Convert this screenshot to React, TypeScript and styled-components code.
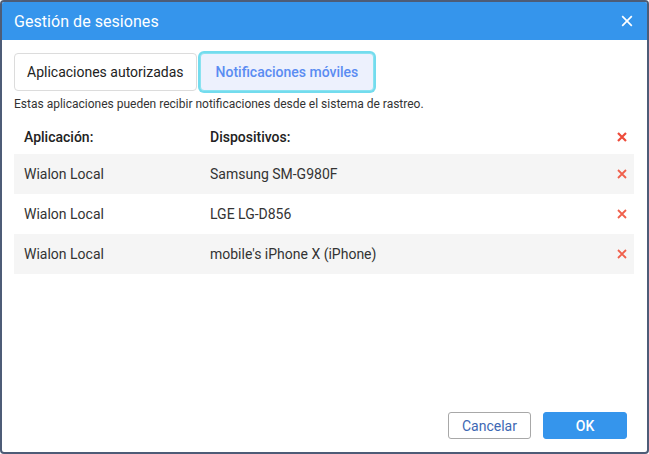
import React from "react";
import styled, { createGlobalStyle } from "styled-components";

const Global = createGlobalStyle`
  html, body { margin: 0; padding: 0; background: #fff; }
  body { font-family: Roboto, "Noto Sans", Arial, sans-serif; }
  * { box-sizing: border-box; }
`;

const Dialog = styled.div`
  width: 649px;
  height: 454px;
  border: 2px solid #4d5c77;
  border-radius: 4px;
  display: flex;
  flex-direction: column;
  background: #fff;
  overflow: hidden;
`;

const Header = styled.div`
  height: 38px;
  background: #3595ec;
  display: flex;
  align-items: center;
  justify-content: space-between;
  padding: 0 12px 0 12px;
  color: #fff;
  flex-shrink: 0;
`;

const Title = styled.div`
  font-size: 16px;
  font-weight: 400;
  letter-spacing: 0.05px;
`;

const CloseBtn = styled.button`
  border: none;
  background: none;
  padding: 0;
  width: 16px;
  height: 16px;
  display: flex;
  align-items: center;
  justify-content: center;
  cursor: pointer;
`;

const Body = styled.div`
  flex: 1;
  padding: 13px 13px 0 12px;
  display: flex;
  flex-direction: column;
`;

const Tabs = styled.div`
  display: flex;
  align-items: center;
  height: 38px;
`;

const Tab = styled.button<{ $active?: boolean }>`
  height: 38px;
  padding: 0 ${(p) => (p.$active ? "15px" : "12px")};
  font-family: inherit;
  font-size: 14px;
  font-weight: ${(p) => (p.$active ? 500 : 400)};
  border-radius: 4px;
  cursor: pointer;
  background: ${(p) => (p.$active ? "#edf1fd" : "#fff")};
  color: ${(p) => (p.$active ? "#5a8cf2" : "#222")};
  border: 1px solid ${(p) => (p.$active ? "#8ae2f0" : "#dcdcdc")};
  box-shadow: ${(p) => (p.$active ? "0 0 0 2px #73dcee" : "none")};
  margin-left: ${(p) => (p.$active ? "3px" : "0")};
`;

const Hint = styled.div`
  margin-top: 5px;
  font-size: 12px;
  color: #333;
  line-height: 16px;
`;

const Table = styled.div`
  margin-top: 8px;
  display: flex;
  flex-direction: column;
`;

const Row = styled.div<{ $shade?: boolean; $head?: boolean }>`
  display: grid;
  grid-template-columns: 186px 1fr 20px;
  align-items: center;
  height: ${(p) => (p.$head ? "34px" : "40px")};
  padding: 0 2px 0 10px;
  background: ${(p) => (p.$shade ? "#f5f5f5" : "#fff")};
  font-size: 14px;
  color: ${(p) => (p.$head ? "#222" : "#333")};
  font-weight: ${(p) => (p.$head ? 500 : 400)};
`;

const Cell = styled.div`
  white-space: nowrap;
`;

const DelBtn = styled.button`
  border: none;
  background: none;
  padding: 0;
  width: 20px;
  height: 20px;
  display: flex;
  align-items: center;
  justify-content: center;
  cursor: pointer;
`;

const Footer = styled.div`
  display: flex;
  justify-content: flex-end;
  gap: 12px;
  padding: 0 20px 13px 0;
`;

const Button = styled.button<{ $primary?: boolean }>`
  height: 27px;
  width: ${(p) => (p.$primary ? "84px" : "83px")};
  border-radius: 3px;
  font-family: inherit;
  font-size: 14px;
  font-weight: ${(p) => (p.$primary ? 500 : 400)};
  cursor: pointer;
  background: ${(p) => (p.$primary ? "#3595ec" : "#fff")};
  color: ${(p) => (p.$primary ? "#fff" : "#3d68b3")};
  border: 1px solid ${(p) => (p.$primary ? "#3595ec" : "#a8a8a8")};
`;

const XIcon = ({ size, color, stroke }: { size: number; color: string; stroke: number }) => (
  <svg width={size} height={size} viewBox="0 0 10 10">
    <path d="M1 1 L9 9 M9 1 L1 9" stroke={color} strokeWidth={stroke} strokeLinecap="butt" />
  </svg>
);

const rows = [
  { app: "Wialon Local", device: "Samsung SM-G980F" },
  { app: "Wialon Local", device: "LGE LG-D856" },
  { app: "Wialon Local", device: "mobile's iPhone X (iPhone)" },
];

export default function App() {
  return (
    <>
      <Global />
      <Dialog>
        <Header>
          <Title>Gestión de sesiones</Title>
          <CloseBtn aria-label="Cerrar">
            <XIcon size={12} color="#fff" stroke={1.4} />
          </CloseBtn>
        </Header>
        <Body>
          <Tabs>
            <Tab>Aplicaciones autorizadas</Tab>
            <Tab $active>Notificaciones móviles</Tab>
          </Tabs>
          <Hint>Estas aplicaciones pueden recibir notificaciones desde el sistema de rastreo.</Hint>
          <Table>
            <Row $head>
              <Cell>Aplicación:</Cell>
              <Cell>Dispositivos:</Cell>
              <DelBtn aria-label="Eliminar todo">
                <XIcon size={10} color="#ee4b3a" stroke={2.2} />
              </DelBtn>
            </Row>
            {rows.map((r, i) => (
              <Row key={i} $shade={i % 2 === 0}>
                <Cell>{r.app}</Cell>
                <Cell>{r.device}</Cell>
                <DelBtn aria-label="Eliminar">
                  <XIcon size={10} color="#f0604c" stroke={1.8} />
                </DelBtn>
              </Row>
            ))}
          </Table>
        </Body>
        <Footer>
          <Button>Cancelar</Button>
          <Button $primary>OK</Button>
        </Footer>
      </Dialog>
    </>
  );
}
